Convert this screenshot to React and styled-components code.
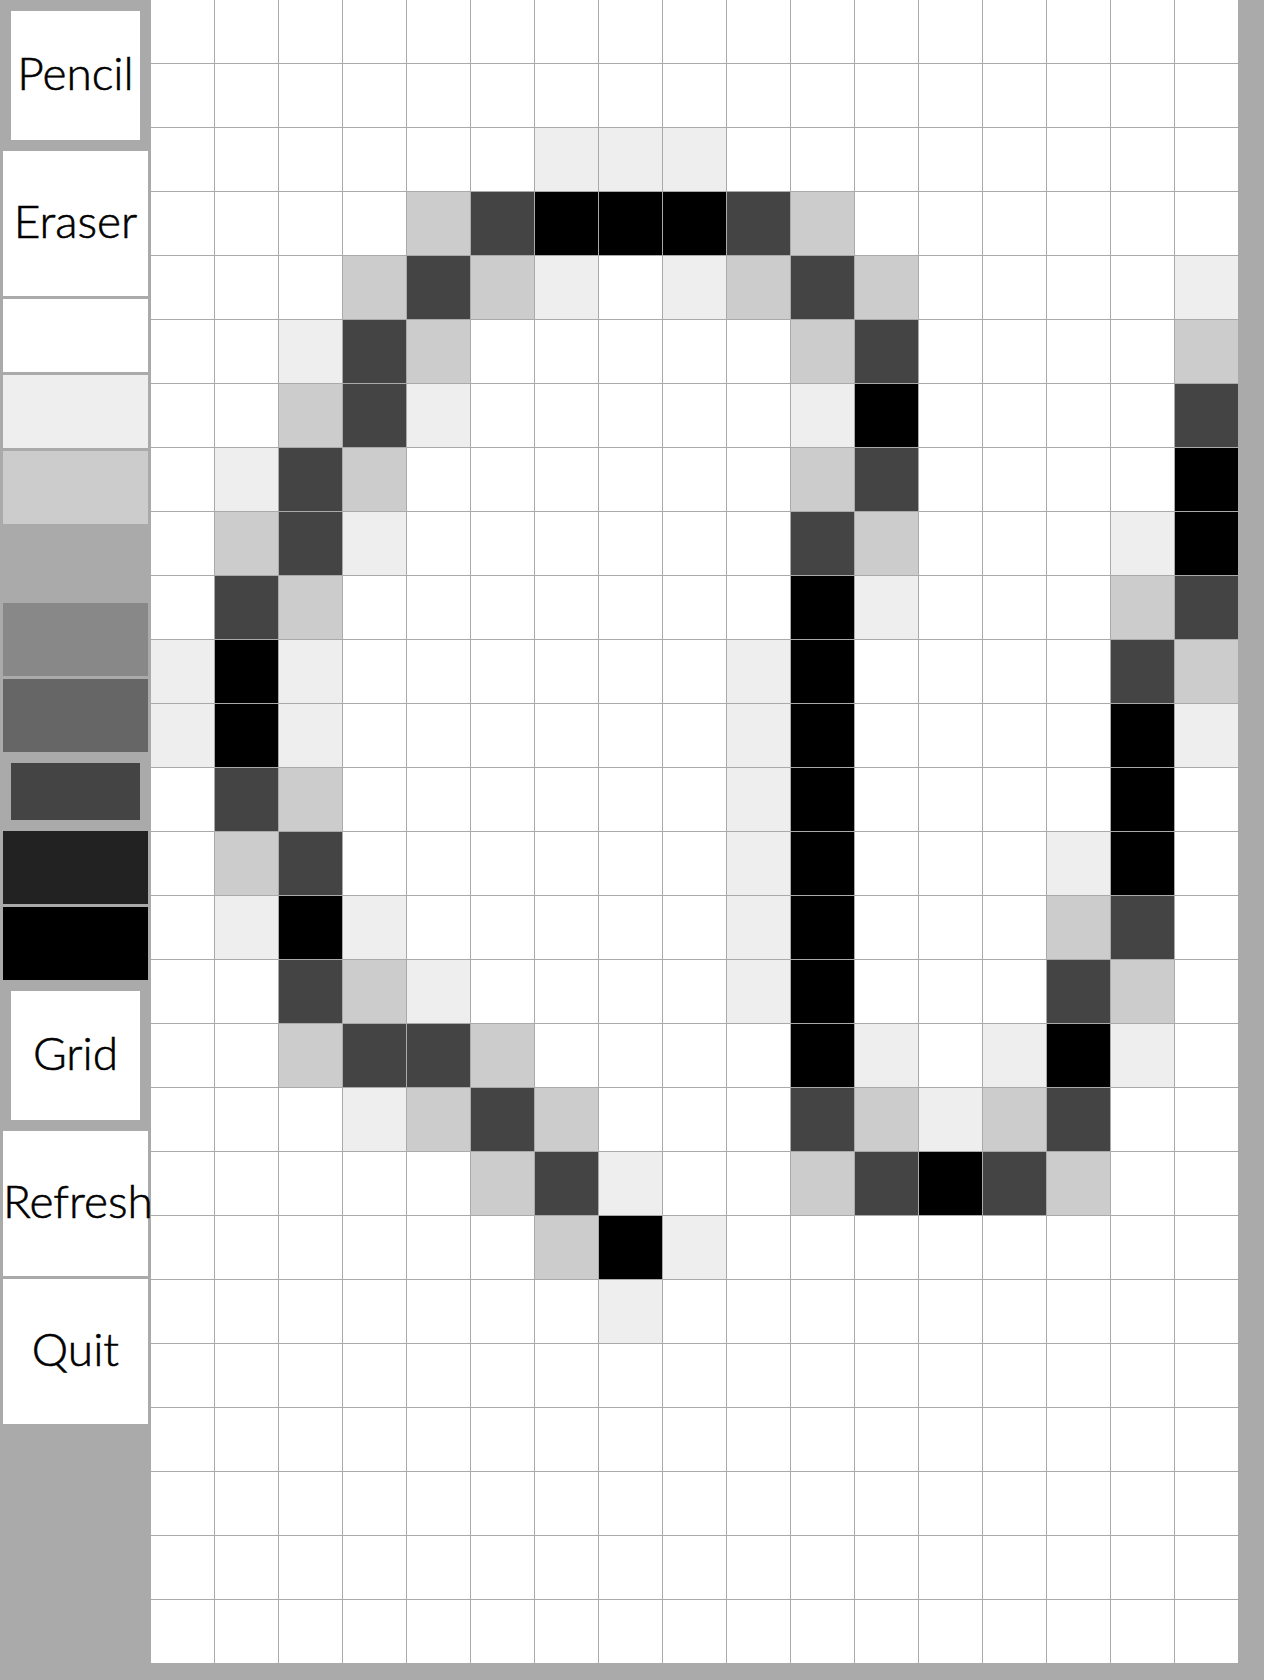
import React from "react";
import styled, { createGlobalStyle } from "styled-components";

const GlobalStyle = createGlobalStyle`
  html, body { margin: 0; padding: 0; background: #aaaaaa; }
`;

const Page = styled.div`
  display: flex;
  align-items: flex-start;
  width: 1264px;
  height: 1680px;
  background: #aaaaaa;
  overflow: hidden;
`;

const Toolbar = styled.div`
  display: flex;
  flex-direction: column;
  gap: 3px;
  box-sizing: border-box;
  flex: 0 0 151px;
  width: 151px;
  padding: 3px;
`;

const ToolButton = styled.button`
  display: block;
  box-sizing: border-box;
  width: 145px;
  height: 145px;
  padding: 0 0 6px;
  margin: 0;
  border: ${(p) => (p.$selected ? "8px solid #aaaaaa" : "none")};
  border-radius: 0;
  background: #ffffff;
  color: #000000;
  font-family: "Lato", "Noto Sans", sans-serif;
  font-size: 46px;
  font-weight: 300;
  -webkit-text-stroke: 0.6px #000000;
  line-height: 1;
  white-space: nowrap;
  overflow: visible;
  text-align: center;
`;

const Swatch = styled.div`
  box-sizing: border-box;
  width: 145px;
  height: 73px;
  border: ${(p) => (p.$selected ? "8px solid #aaaaaa" : "none")};
  background: ${(p) => p.$color};
`;

const Canvas = styled.div`
  display: grid;
  grid-template-columns: repeat(17, 63px);
  grid-auto-rows: 63px;
  gap: 1px;
  background: #aaaaaa;
`;

const Pixel = styled.div`
  background: ${(p) => p.$color};
`;

const palette = { ".": "#ffffff", e: "#eeeeee", c: "#cccccc", d: "#444444", k: "#000000" };

const art = [
  ".................",
  ".................",
  "......eee........",
  "....cdkkkdc......",
  "...cdce.ecdc....e",
  "..edc.....cd....c",
  "..cde.....ek....d",
  ".edc......cd....k",
  ".cde......dc...ek",
  ".dc.......ke...cd",
  "eke......ek....dc",
  "eke......ek....ke",
  ".dc......ek....k.",
  ".cd......ek...ek.",
  ".eke.....ek...cd.",
  "..dce....ek...dc.",
  "..cddc....ke.eke.",
  "...ecdc...dcecd..",
  ".....cde..cdkdc..",
  "......cke........",
  ".......e.........",
  ".................",
  ".................",
  ".................",
  ".................",
  ".................",
];

const swatches = [
  { color: "#ffffff" },
  { color: "#eeeeee" },
  { color: "#cccccc" },
  { color: "#aaaaaa" },
  { color: "#888888" },
  { color: "#666666" },
  { color: "#444444", selected: true },
  { color: "#222222" },
  { color: "#000000" },
];

export default function App() {
  return (
    <Page>
      <GlobalStyle />
      <Toolbar>
        <ToolButton $selected>Pencil</ToolButton>
        <ToolButton>Eraser</ToolButton>
        {swatches.map((s) => (
          <Swatch key={s.color} $color={s.color} $selected={s.selected} />
        ))}
        <ToolButton $selected>Grid</ToolButton>
        <ToolButton>Refresh</ToolButton>
        <ToolButton>Quit</ToolButton>
      </Toolbar>
      <Canvas>
        {art.flatMap((row, y) =>
          row.split("").map((ch, x) => <Pixel key={`${x}-${y}`} $color={palette[ch]} />)
        )}
      </Canvas>
    </Page>
  );
}
